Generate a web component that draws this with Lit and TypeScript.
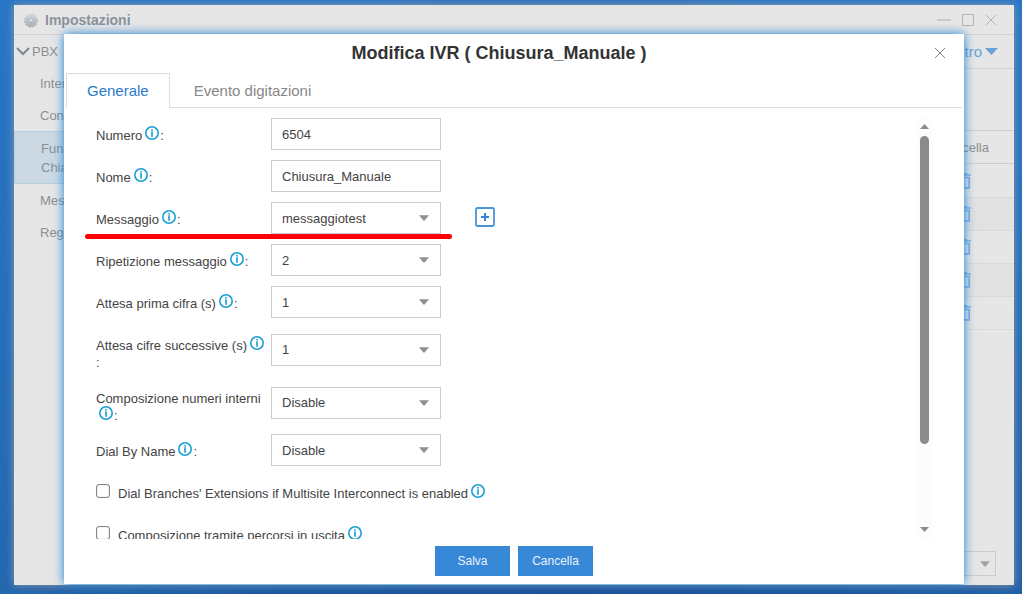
import { LitElement, html, css, svg, nothing } from "lit";
import { customElement, property } from "lit/decorators.js";

interface Field {
  id: string;
  label: string;
  value: string;
  kind: "text" | "select";
  add?: boolean;
  marked?: boolean;
}

const FIELDS: Field[] = [
  { id: "numero", label: "Numero", value: "6504", kind: "text" },
  { id: "nome", label: "Nome", value: "Chiusura_Manuale", kind: "text" },
  { id: "messaggio", label: "Messaggio", value: "messaggiotest", kind: "select", add: true, marked: true },
  { id: "ripetizione", label: "Ripetizione messaggio", value: "2", kind: "select" },
  { id: "prima", label: "Attesa prima cifra (s)", value: "1", kind: "select" },
  { id: "successive", label: "Attesa cifre successive (s)", value: "1", kind: "select" },
  { id: "interni", label: "Composizione numeri interni", value: "Disable", kind: "select" },
  { id: "byname", label: "Dial By Name", value: "Disable", kind: "select" },
];

const CHECKS = [
  { id: "branches", label: "Dial Branches' Extensions if Multisite Interconnect is enabled" },
  { id: "percorsi", label: "Composizione tramite percorsi in uscita" },
];

const cross = svg`<path d="M1 1L11 11M11 1L1 11" fill="none" stroke="currentColor" stroke-width="1"/>`;
const caret = html`<svg class="caret" width="10" height="6" viewBox="0 0 10 6" aria-hidden="true"><path d="M0 .3H10L5.600 5.500H4.400Z" fill="currentColor"/></svg>`;
const info = html`<svg class="info" width="14" height="14" viewBox="0 0 14 14" aria-hidden="true">
  <circle cx="7" cy="7" r="6.2" fill="none" stroke="#1b9fd2" stroke-width="1.6"/>
  <path d="M6 3H8V4.4H6ZM6 5.200H8V10.700H6Z" fill="#43b0da"/>
</svg>`;

@customElement("settings-window")
export class SettingsWindow extends LitElement {
  static styles = css`
    :host { display: flex; flex-direction: column; background: #e6e6e6; color: #8c8f93; font-size: 13px; box-sizing: border-box; overflow: hidden; }
    .bar { display: flex; align-items: center; height: 29px; padding: 0 17px 0 9px; border-bottom: 1px solid #d2d2d2; gap: 6px; box-sizing: content-box; }
    .title { flex: 1; margin: 0; font-size: 14px; line-height: 20px; font-weight: bold; color: #8b929b; }
    .ctl { display: flex; padding: 0; border: 0; background: none; color: #b4b4b4; margin-left: 5px; }
    .body { display: flex; flex: 1; min-height: 0; }
    .nav { width: 140px; flex: none; }
    .group { display: flex; align-items: center; gap: 2px; height: 33px; padding-left: 2px; font-size: 13px; }
    .link { display: block; padding: 7px 50px 7px 26px; line-height: 18px; color: inherit; text-decoration: none; }
    .link.active { margin: -1px 0 1px; padding: 7px 50px 6px 26px; line-height: 19px; background: #cbd9e4; border: 1px solid #b5cfe2; border-right: 0; }
    .main { flex: 1; display: flex; flex-direction: column; min-width: 0; }
    .filter { display: flex; justify-content: flex-end; align-items: center; gap: 3px; height: 33px; padding-right: 16px; border-bottom: 1px solid #d2d2d2; color: #6ba2d6; font-size: 15px; }
    .list { width: 100%; margin-top: 61px; border-collapse: collapse; border-top: 1px solid #cdcdcd; text-align: right; }
    .list th { height: 32px; padding: 0 25px 0 0; font-weight: normal; border-bottom: 1px solid #cdcdcd; }
    .list td { height: 32px; padding: 0 43px 0 0; border-bottom: 1px solid #d9d9d9; }
    .list tr:first-child td { height: 33px; }
    .list tr:nth-child(even) td { background: #e1e1e1; }
    .del { padding: 0; border: 0; background: none; display: inline-flex; vertical-align: middle; }
    .foot { margin-top: auto; padding: 0 18px 9px 0; display: flex; justify-content: flex-end; }
    .pager { position: relative; display: flex; align-items: center; }
    .pager select { appearance: none; width: 70px; height: 25px; border: 1px solid #cbcbcb; border-radius: 0; background: transparent; }
    .caret { position: absolute; right: 6px; color: #a3a3a3; pointer-events: none; }
  `;

  render() {
    return html`
      <div class="bar">
        <svg width="16" height="16" viewBox="0 0 16 16" aria-hidden="true">
          <defs><linearGradient id="g" x1="0" y1="0" x2="0" y2="1"><stop offset="0" stop-color="#d2d5d9"/><stop offset="1" stop-color="#a7afb8"/></linearGradient></defs>
          <circle cx="8" cy="8.500" r="6" fill="url(#g)"/>
          <circle cx="8" cy="8.500" r="6.3" fill="none" stroke="url(#g)" stroke-width="1.6" stroke-dasharray="2.400 .9"/>
          <circle cx="8" cy="8" r="1.800" fill="#dfe3e7" stroke="#b3bac2" stroke-width=".8"/>
        </svg>
        <h2 class="title">Impostazioni</h2>
        <button class="ctl" aria-label="Riduci"><svg width="14" height="12" viewBox="0 0 14 12"><path d="M0 6H14" stroke="#cbcbcb" stroke-width="2"/></svg></button>
        <button class="ctl" aria-label="Ingrandisci"><svg width="12" height="12" viewBox="0 0 12 12"><path d="M.5 .5H11.5V11.5H.5Z" fill="none" stroke="currentColor"/></svg></button>
        <button class="ctl" aria-label="Chiudi"><svg width="12" height="12" viewBox="0 0 12 12">${cross}</svg></button>
      </div>
      <div class="body">
        <nav class="nav">
          <div class="group"><svg width="14" height="9" viewBox="0 0 14 9" aria-hidden="true"><path d="M1 1L7 7L13 1" fill="none" stroke="#7c8794" stroke-width="2"/></svg>PBX</div>
          <a class="link" href="#interni">Interni</a>
          <a class="link" href="#controllo">Controllo</a>
          <a class="link active" href="#funzioni">Funzioni Chiamata</a>
          <a class="link" href="#messaggi">Messaggi</a>
          <a class="link" href="#registrazioni">Registrazioni</a>
        </nav>
        <div class="main">
          <div class="filter">Filtro<svg width="13" height="7" viewBox="0 0 13 7" aria-hidden="true"><path d="M0 0H13L6.500 7Z" fill="currentColor"/></svg></div>
          <table class="list">
            <thead><tr><th>Cancella</th></tr></thead>
            <tbody>
              ${[1, 2, 3, 4, 5].map(() => html`<tr><td><button class="del" aria-label="Cancella"><svg width="15" height="16" viewBox="0 0 15 16"><path d="M4 .7H11M0 2H15M2 4.500V14.800H13.200V4.500ZM7.600 5V14" fill="none" stroke="#84b1e0" stroke-width="1.7"/></svg></button></td></tr>`)}
            </tbody>
          </table>
          <div class="foot"><div class="pager"><select aria-label="Righe"><option></option></select>${caret}</div></div>
        </div>
      </div>`;
  }
}

@customElement("form-row")
export class FormRow extends LitElement {
  @property({ attribute: false }) field!: Field;

  static styles = css`
    :host { display: block; }
    .row { position: relative; display: grid; grid-template-columns: 170px 170px auto; column-gap: 5px; align-items: center; justify-content: start; min-height: 32px; }
    .label { align-self: start; padding-top: 9px; line-height: 17px; }
    .info { margin: 0 1px 0 3px; vertical-align: -1px; position: relative; top: -1px; }
    .box { position: relative; display: flex; align-items: center; }
    .input { appearance: none; box-sizing: border-box; width: 100%; height: 32px; margin: 0; padding: 0 10px; border: 1px solid #ccc; border-radius: 0; background: #fff; color: #444; font: inherit; outline: 0; }
    .caret { position: absolute; right: 12px; color: #909090; pointer-events: none; }
    .add { display: flex; width: 20px; margin-left: 29px; padding: 0 0 2px; border: 0; background: none; }
    .mark { position: absolute; left: -11px; bottom: -5px; width: 367px; height: 5px; border-radius: 3px; background: #f00; }
  `;

  render() {
    const f = this.field;
    return html`
      <div class="row">
        <label class="label" for=${f.id}>${f.label}${info}:</label>
        <div class="box">
          ${f.kind === "text"
            ? html`<input class="input" id=${f.id} .value=${f.value}>`
            : html`<select class="input" id=${f.id}><option>${f.value}</option></select>${caret}`}
        </div>
        ${f.add
          ? html`<button class="add" aria-label="Aggiungi"><svg width="20" height="20" viewBox="0 0 20 20"><rect x="1" y="1" width="18" height="18" rx="1.500" fill="none" stroke="#4a92db" stroke-width="1.800"/><path d="M10 6V14M6 10H14" stroke="#3686d8" stroke-width="2"/></svg></button>`
          : nothing}
        ${f.marked ? html`<div class="mark"></div>` : nothing}
      </div>`;
  }
}

@customElement("ivr-dialog")
export class IvrDialog extends LitElement {
  static styles = css`
    :host { display: flex; flex-direction: column; background: #fff; color: #444; font-size: 13px; }
    .head { display: flex; align-items: center; height: 38px; margin-bottom: 1px; flex: none; padding-right: 18px; }
    .title { flex: 1; margin: 0; text-align: center; font-size: 18px; line-height: 24px; color: #333; }
    .close { display: flex; padding: 0; border: 0; background: none; color: #808080; }
    .tabs { display: flex; flex: none; height: 35px; margin: 0 2px; box-shadow: inset 0 -1px #ddd; }
    .tab { border: 0; background: none; padding: 0 24px; font: inherit; font-size: 15px; color: #888; }
    .tab.on { padding: 0 20px 1px; background: #fff; border: 1px solid #ddd; border-bottom: 0; color: #2a7bc8; }
    .content { flex: 1; min-height: 0; display: flex; margin: 10px 32px 0; }
    .form { flex: 1; min-width: 0; overflow: hidden; display: flex; flex-direction: column; gap: 10px; margin-left: -12px; padding-left: 12px; }
    .form > * { flex: none; }
    .check { display: flex; align-items: flex-start; height: 32px; }
    .check input { appearance: none; box-sizing: border-box; width: 14px; height: 14px; margin: 8px 8px 0 0; border: 1px solid #858585; border-radius: 3px; background: #fff; box-shadow: inset 0 0 1px #858585; }
    .check label { padding-top: 9px; line-height: 17px; }
    .info { margin-left: 3px; vertical-align: -1px; position: relative; top: -1px; }
    .scroll { width: 15px; background: #fcfcfc; display: flex; flex-direction: column; align-items: center; color: #8b8b8b; }
    .scroll svg { flex: none; margin: 6px 0 7px; }
    .track { flex: 1; width: 9px; }
    .thumb { height: 80%; border-radius: 5px; background: #8b8b8b; }
    .foot { display: flex; justify-content: center; gap: 8px; padding: 7px 0 8px; flex: none; }
    .btn { width: 75px; height: 30px; padding: 0; border: 0; background: #3888d8; color: #e9f2fb; font: inherit; font-size: 12px; }
  `;

  render() {
    return html`
      <div class="head">
        <h1 class="title">Modifica IVR ( Chiusura_Manuale )</h1>
        <button class="close" aria-label="Chiudi"><svg width="12" height="12" viewBox="0 0 12 12">${cross}</svg></button>
      </div>
      <div class="tabs" role="tablist">
        <button class="tab on" role="tab" aria-selected="true">Generale</button>
        <button class="tab" role="tab" aria-selected="false">Evento digitazioni</button>
      </div>
      <div class="content">
        <div class="form">
          ${FIELDS.map((f) => html`<form-row .field=${f}></form-row>`)}
          ${CHECKS.map((c) => html`<div class="check"><input type="checkbox" id=${c.id}><label for=${c.id}>${c.label}${info}</label></div>`)}
        </div>
        <div class="scroll" aria-hidden="true">
          <svg width="9" height="5" viewBox="0 0 9 5"><path d="M0 5H9L4.500 0Z" fill="currentColor"/></svg>
          <div class="track"><div class="thumb"></div></div>
          <svg width="9" height="5" viewBox="0 0 9 5"><path d="M0 0H9L4.500 5Z" fill="currentColor"/></svg>
        </div>
      </div>
      <div class="foot">
        <button class="btn">Salva</button>
        <button class="btn">Cancella</button>
      </div>`;
  }
}

@customElement("app-root")
export class AppRoot extends LitElement {
  static styles = css`
    :host { display: block; position: relative; height: 100vh; overflow: hidden; font-family: "Liberation Sans", Arial, sans-serif;
      background: radial-gradient(ellipse at 55% 130%, #174a8e 0, #1c559e 35%, rgba(34, 108, 186, 0) 75%), linear-gradient(#2776c8, #2468b0); }
    .window { position: absolute; inset: 5px 8px 9px 14px; box-shadow: 0 0 8px rgba(160, 160, 160, 0.9); }
    .dialog { position: absolute; inset: 34px 58px 10px 64px; box-shadow: 0 0 10px #1a7fd4; }
  `;

  render() {
    return html`<settings-window class="window"></settings-window><ivr-dialog class="dialog"></ivr-dialog>`;
  }
}
